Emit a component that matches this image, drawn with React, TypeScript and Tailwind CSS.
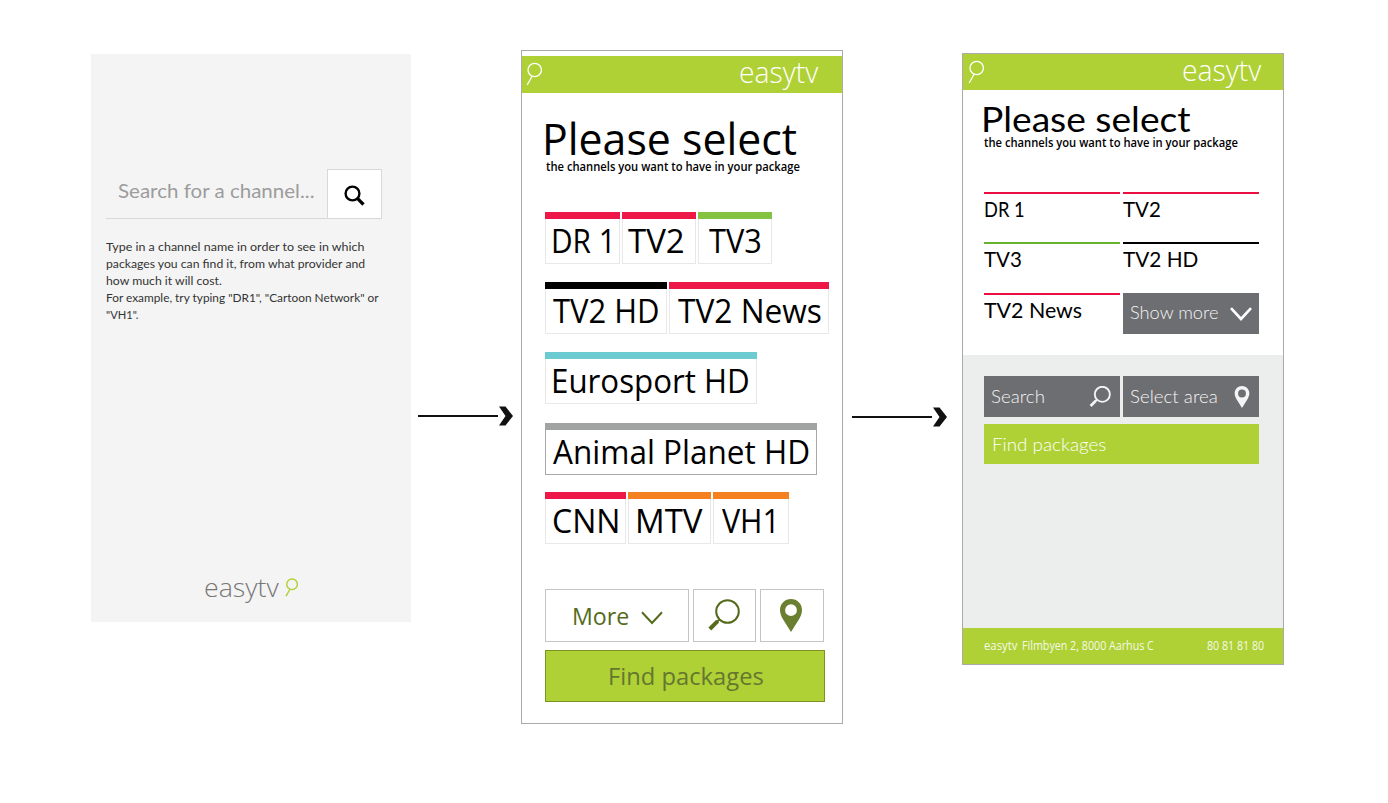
import { useLayoutEffect, useRef, useState } from "react";
import clsx from "clsx";

const sans = "font-['Lato','Liberation_Sans',sans-serif]";
const humanist = "font-['Open_Sans','Noto_Sans',sans-serif]";

/** One line of text stretched or condensed to the width of its box. */
function Fit({ children, className }: { children: string; className: string }) {
  const box = useRef<HTMLSpanElement>(null);
  const text = useRef<HTMLSpanElement>(null);
  const [scale, setScale] = useState(1);
  useLayoutEffect(() => {
    if (box.current && text.current) {
      setScale(box.current.clientWidth / text.current.offsetWidth);
    }
  }, [children]);
  return (
    <span ref={box} className={clsx("block shrink-0", className)}>
      <span ref={text} className="inline-block origin-left whitespace-nowrap align-top" style={{ transform: `scaleX(${scale})` }}>
        {children}
      </span>
    </span>
  );
}

function LogoGlass({ className, stroke = 1.3 }: { className: string; stroke?: number }) {
  return (
    <svg viewBox="0 0 16 24" fill="none" stroke="currentColor" strokeWidth={stroke} className={className}>
      <circle cx="8.7" cy="8" r="6.7" />
      <path d="M6 14.2 1.2 23" />
    </svg>
  );
}

function Glass({ className, stroke = 2 }: { className: string; stroke?: number }) {
  return (
    <svg viewBox="0 0 32 33" fill="none" stroke="currentColor" className={className}>
      <circle cx="19.5" cy="12.5" r="11.3" strokeWidth={stroke} />
      <path d="M11.3 20.6 9 22.8" strokeWidth={stroke} />
      <path d="M9.7 22.2 1.8 30" strokeWidth="4" />
    </svg>
  );
}

function Pin({ className }: { className: string }) {
  return (
    <svg viewBox="0 0 22 33" fill="currentColor" className={className}>
      <path
        fillRule="evenodd"
        d="M11 0C4.900 0 0 4.800 0 10.900c0 3.500 1.400 6.600 3.300 9.800L11 33l7.700-12.300C20.600 17.500 22 14.400 22 10.900 22 4.800 17.100 0 11 0Zm0 5.300a5.900 5.900 0 1 1 0 11.800 5.900 5.900 0 0 1 0-11.800Z"
      />
    </svg>
  );
}

function Chevron({ className, stroke }: { className: string; stroke: number }) {
  return (
    <svg viewBox="0 0 22 14" fill="none" stroke="currentColor" strokeWidth={stroke} className={className}>
      <path d="M1 1.200 11 12 21 1.200" />
    </svg>
  );
}

function Arrow({ className }: { className: string }) {
  return (
    <div className={clsx("flex h-5 shrink-0 items-center", className)}>
      <div className="h-0.5 w-20 bg-[#111]" />
      <svg viewBox="0 0 15 20" className="h-5 w-[15px]" fill="#111">
        <path d="M1 .5h6.500l7.500 9.500-7.500 9.500H1L7.500 10Z" />
      </svg>
    </div>
  );
}

function Header({ className }: { className: string }) {
  return (
    <header className={clsx("flex items-start justify-between bg-[#afd136] text-white", className)}>
      <LogoGlass className="mt-1.5 h-6 w-4" />
      <Fit className={clsx(humanist, "mt-px w-[79px] text-[29px] leading-[30px] font-light")}>easytv</Fit>
    </header>
  );
}

type TileProps = { bar: string; box: string; text: string; border?: string; children: string };

function Tile({ bar, box, text, border = "border-[#e8e8e8]", children }: TileProps) {
  return (
    <div className={clsx("h-[52px] border", border, box)}>
      <div className={clsx("-mx-px -mt-px h-[7px]", bar)} />
      <Fit className={clsx(humanist, "mt-[5px] text-[33px] leading-[34px] text-black", text)}>{children}</Fit>
    </div>
  );
}

function Listing({ bar, text, children }: { bar: string; text: string; children: string }) {
  return (
    <div className={clsx("h-[50px] w-[136px] border-t-2", bar)}>
      <Fit className={clsx(sans, "mt-[3px] text-[20.5px] leading-6 text-black", text)}>{children}</Fit>
    </div>
  );
}

function SearchScreen() {
  return (
    <section className={clsx(sans, "mt-[54px] flex h-[568px] w-[320px] shrink-0 flex-col bg-[#f4f4f4] pl-[15px]")}>
      <div className="mt-[115px] flex h-[50px] w-[276px]">
        <div className="w-[221px] border-b border-[#d8d8d8] pt-[9px] pl-3">
          <Fit className="w-[196px] text-[20px] leading-6 text-[#9c9c9c]">Search for a channel...</Fit>
        </div>
        <button className="flex h-[50px] w-[55px] items-center justify-center border border-[#d8d8d8] bg-white">
          <svg viewBox="0 0 21 21" fill="none" stroke="#000" className="mt-0.5 h-[21px] w-[21px]">
            <circle cx="8.500" cy="8.500" r="6.900" strokeWidth="2.400" />
            <path d="m13.400 13.400 6.100 6.100" strokeWidth="3.200" />
          </svg>
        </button>
      </div>
      <div className="mt-[19px] text-[11.5px] leading-[17px] text-[#333]">
        <Fit className="w-[258px]">Type in a channel name in order to see in which</Fit>
        <Fit className="w-[259px]">packages you can find it, from what provider and</Fit>
        <Fit className="w-[116px]">how much it will cost.</Fit>
        <Fit className="w-[273px]">For example, try typing "DR1", "Cartoon Network" or</Fit>
        <Fit className="w-[32px]">"VH1".</Fit>
      </div>
      <div className="mt-[249px] flex pl-[98px]">
        <Fit className={clsx(humanist, "w-[75px] text-[26px] leading-[30px] font-light text-[#777]")}>easytv</Fit>
        <LogoGlass className="mt-1.5 ml-1.5 h-[19px] w-[13px] text-[#afd136]" stroke={1.8} />
      </div>
    </section>
  );
}

function TileScreen() {
  return (
    <section className="mt-[50px] ml-2 h-[674px] w-[322px] shrink-0 border border-[#aaa] pt-[5px]">
      <Header className="h-[37px] pr-6 pl-1" />
      <div className={clsx(humanist, "pl-[23px]")}>
        <h1 className="mt-[23px] -ml-[3px]">
          <Fit className="w-[255px] text-[44.5px] leading-[44px] text-black">Please select</Fit>
        </h1>
        <Fit className="ml-px w-[254px] text-[12px] leading-[14px] font-semibold text-black">the channels you want to have in your package</Fit>
        <div className="mt-[38px] flex flex-col gap-[18px]">
          <div className="flex gap-0.5">
            <Tile bar="bg-[#ee1848]" box="w-[75px]" text="ml-[5px] w-[65px]">DR 1</Tile>
            <Tile bar="bg-[#ee1848]" box="w-[74px]" text="ml-[5px] w-[57px]">TV2</Tile>
            <Tile bar="bg-[#83c341]" box="w-[74px]" text="ml-[10px] w-[53px]">TV3</Tile>
          </div>
          <div className="flex gap-0.5">
            <Tile bar="bg-black" box="w-[122px]" text="ml-[7px] w-[107px]">TV2 HD</Tile>
            <Tile bar="bg-[#ee1848]" box="w-[160px]" text="ml-2 w-[144px]">TV2 News</Tile>
          </div>
          <div className="flex">
            <Tile bar="bg-[#6ccad1]" box="w-[212px]" text="ml-[5px] w-[199px]">Eurosport HD</Tile>
          </div>
          <div className="mt-px -mb-px flex">
            <Tile bar="bg-[#a2a4a3]" border="border-[#a9a9a9]" box="w-[272px]" text="ml-[7px] w-[257px]">Animal Planet HD</Tile>
          </div>
          <div className="flex gap-0.5">
            <Tile bar="bg-[#ee1848]" box="w-[81px]" text="ml-1.5 w-[68px]">CNN</Tile>
            <Tile bar="bg-[#f58020]" box="w-[83px]" text="ml-1.5 w-[68px]">MTV</Tile>
            <Tile bar="bg-[#f58020]" box="w-[76px]" text="ml-2 w-[58px]">VH1</Tile>
          </div>
        </div>
        <div className="mt-[45px] flex gap-1 text-[#556b1c]">
          <button className="flex h-[53px] w-[144px] items-center border border-[#c4c4c4] pl-[26px]">
            <Fit className="w-[57px] text-left text-[24px] leading-6">More</Fit>
            <Chevron className="mt-1 ml-3 h-3.5 w-[22px]" stroke={2} />
          </button>
          <button className="flex h-[53px] w-[63px] items-center justify-center border border-[#c4c4c4] pr-0.5">
            <Glass className="h-[33px] w-8" />
          </button>
          <button className="flex h-[53px] w-[64px] items-center justify-center border border-[#c4c4c4] pr-0.5 text-[#6a7f30]">
            <Pin className="h-[33px] w-[22px]" />
          </button>
        </div>
        <button className="mt-2 flex h-[52px] w-[280px] items-center border border-[#7c9426] bg-[#afd136] pl-[62px] text-[#65772f]">
          <Fit className="w-[156px] text-left text-[24.5px] leading-6">Find packages</Fit>
        </button>
      </div>
    </section>
  );
}

function ListScreen() {
  return (
    <section className="mt-[53px] ml-[15px] flex h-[612px] w-[322px] shrink-0 flex-col border border-[#aaa]">
      <Header className="h-[36px] pr-[22px] pl-[5px]" />
      <div className="h-[265px] pl-[21px]">
        <h1 className="-ml-[3px] pt-3">
          <Fit className={clsx(sans, "w-[210px] text-[34px] leading-[34px] text-black")}>Please select</Fit>
        </h1>
        <Fit className={clsx(humanist, "w-[254px] text-[12px] leading-[14px] font-semibold text-black")}>the channels you want to have in your package</Fit>
        <div className="mt-[42px] grid w-[275px] grid-cols-2 gap-x-[3px]">
          <Listing bar="border-[#ea0f40]" text="w-[41px]">DR 1</Listing>
          <Listing bar="border-[#ea0f40]" text="w-[38px]">TV2</Listing>
          <Listing bar="border-[#67b32e]" text="w-[38px]">TV3</Listing>
          <Listing bar="border-black" text="w-[75px]">TV2 HD</Listing>
          <Listing bar="mt-px border-[#ea0f40]" text="w-[98px]">TV2 News</Listing>
          <button className={clsx(sans, "mt-px flex h-[41px] w-[136px] items-center bg-[#6d6e71] pl-[7px] text-[#f4f4f4]")}>
            <Fit className="-mt-0.5 w-[88px] text-left text-[17px] leading-5 font-light">Show more</Fit>
            <Chevron className="ml-3 h-3.5 w-[22px] text-white" stroke={2.6} />
          </button>
        </div>
      </div>
      <div className={clsx(sans, "flex-1 bg-[#eceeed] pt-[21px] pl-[21px] font-light text-[#f4f4f4]")}>
        <div className="flex gap-[3px]">
          <button className="flex h-[41px] w-[136px] items-center bg-[#6d6e71] pl-[7px]">
            <Fit className="w-[54px] text-left text-[17px] leading-5">Search</Fit>
            <Glass className="ml-[44px] h-[22px] w-[22px]" stroke={2.8} />
          </button>
          <button className="flex h-[41px] w-[136px] items-center bg-[#6d6e71] pl-[7px]">
            <Fit className="w-[88px] text-left text-[17px] leading-5">Select area</Fit>
            <Pin className="ml-4 h-[22px] w-[16px]" />
          </button>
        </div>
        <button className="mt-[7px] flex h-10 w-[275px] items-center bg-[#afd136] pl-2 text-white">
          <Fit className="mt-0.5 w-[114px] text-left text-[17px] leading-5">Find packages</Fit>
        </button>
      </div>
      <footer className={clsx(humanist, "flex h-[36px] items-center bg-[#afd136] pl-[21px] text-[12px] leading-4 text-[#f6f9e6]")}>
        <Fit className="w-[33px]">easytv</Fit>
        <Fit className="ml-[5px] w-[132px]">Filmbyen 2, 8000 Aarhus C</Fit>
        <Fit className="ml-[53px] w-[57px]">80 81 81 80</Fit>
      </footer>
    </section>
  );
}

export default function App() {
  return (
    <main className="flex h-[803px] w-[1388px] items-start overflow-hidden bg-white pl-[91px]">
      <SearchScreen />
      <Arrow className="mt-[406px] ml-[7px] w-[95px]" />
      <TileScreen />
      <Arrow className="mt-[407px] ml-[9px] w-[95px]" />
      <ListScreen />
    </main>
  );
}
